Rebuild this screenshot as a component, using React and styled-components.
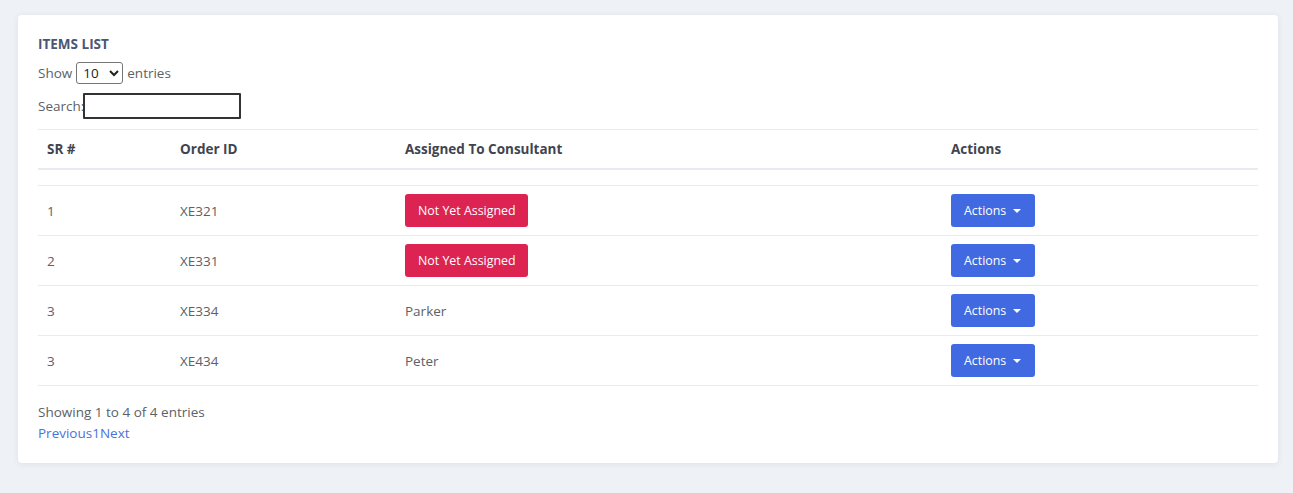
import styled, { createGlobalStyle } from "styled-components";

const GlobalStyle = createGlobalStyle`
  body {
    margin: 0;
    background: #eef1f5;
    font-family: "Open Sans", "Noto Sans", "Liberation Sans", sans-serif;
    font-size: 13.5px;
    color: #5b6168;
  }
`

const Page = styled.div`
  padding: 15px 15px 30px 18px;
`

const Card = styled.div`
  background: #fff;
  border-radius: 4px;
  box-shadow: 0 1px 6px rgba(30, 40, 60, 0.08);
  padding: 20px 20px 19px 20px;
  width: 1220px;
`

const Title = styled.h4`
  margin: 0 0 9px;
  font-size: 13.5px;
  font-weight: 700;
  color: #4b5675;
  line-height: 18px;
`

const ControlRow = styled.div`
  display: flex;
  align-items: center;
  gap: 4px;
  height: ${({ $h }) => $h}px;
  margin-bottom: ${({ $mb }) => $mb || 0}px;
`

const Select = styled.select`
  font-family: inherit;
  font-size: 13.5px;
  width: 47px;
  height: 22px;
  padding: 0 2px;
  border: 1px solid #767676;
  border-radius: 3px;
  color: #222;
  background: #fff;
`

const SearchInput = styled.input`
  width: 158px;
  height: 26px;
  box-sizing: border-box;
  border: 2px solid #333;
  margin-left: -5px;
  border-radius: 1px;
`

const Table = styled.table`
  width: 100%;
  table-layout: fixed;
  border-collapse: collapse;
  border-top: 1px solid #e7eaee;
`

const Th = styled.th`
  box-sizing: border-box;
  text-align: left;
  font-weight: 700;
  color: #3f4550;
  padding: 0 9px;
  height: 39px;
  border-bottom: 2px solid #e7eaee;
  width: ${({ $w }) => ($w ? `${$w}px` : "auto")};
`

const SpacerRow = styled.tr`
  height: 17px;
  border-bottom: 1px solid #e7eaee;
`

const Tr = styled.tr`
  height: 50px;
  border-bottom: 1px solid #e7eaee;
`

const Td = styled.td`
  padding: 0 9px;
  color: #5b6168;
`

const Badge = styled.span`
  display: inline-flex;
  align-items: center;
  height: 33px;
  padding: 0 12px 0 13px;
  border-radius: 3px;
  background: #dc2351;
  color: #fff;
  font-size: 12.4px;
`

const ActionButton = styled.button`
  display: inline-flex;
  align-items: center;
  gap: 7px;
  height: 33px;
  padding: 0 14px 0 13px;
  border: none;
  border-radius: 3px;
  background: #4169e1;
  color: #fff;
  font-family: inherit;
  font-size: 12.4px;
`

const Caret = styled.span`
  width: 0;
  height: 0;
  border-left: 4px solid transparent;
  border-right: 4px solid transparent;
  border-top: 4px solid #fff;
  margin-top: 1px;
`

const Info = styled.div`
  margin-top: 16px;
  line-height: 21px;
`

const Pager = styled.div`
  line-height: 21px;
  color: #4a72dc;
`

const rows = [
  { sr: 1, id: "XE321", who: null },
  { sr: 2, id: "XE331", who: null },
  { sr: 3, id: "XE334", who: "Parker" },
  { sr: 3, id: "XE434", who: "Peter" },
];

const App = () => {
  return (
    <Page>
      <GlobalStyle />
      <Card>
        <Title>ITEMS LIST</Title>
        <ControlRow $h={22} $mb={9}>
          Show
          <Select defaultValue="10">
            <option>10</option>
            <option>25</option>
            <option>50</option>
          </Select>
          entries
        </ControlRow>
        <ControlRow $h={26} $mb={10}>
          Search:
          <SearchInput />
        </ControlRow>
        <Table>
          <thead>
            <tr>
              <Th $w={133}>SR #</Th>
              <Th $w={225}>Order ID</Th>
              <Th $w={546}>Assigned To Consultant</Th>
              <Th>Actions</Th>
            </tr>
          </thead>
          <tbody>
            <SpacerRow>
              <td colSpan={4} />
            </SpacerRow>
            {rows.map((r) => (
              <Tr key={r.id}>
                <Td>{r.sr}</Td>
                <Td>{r.id}</Td>
                <Td>{r.who ? r.who : <Badge>Not Yet Assigned</Badge>}</Td>
                <Td>
                  <ActionButton>
                    Actions <Caret />
                  </ActionButton>
                </Td>
              </Tr>
            ))}
          </tbody>
        </Table>
        <Info>Showing 1 to 4 of 4 entries</Info>
        <Pager>Previous1Next</Pager>
      </Card>
    </Page>
  );
};

export default App;
